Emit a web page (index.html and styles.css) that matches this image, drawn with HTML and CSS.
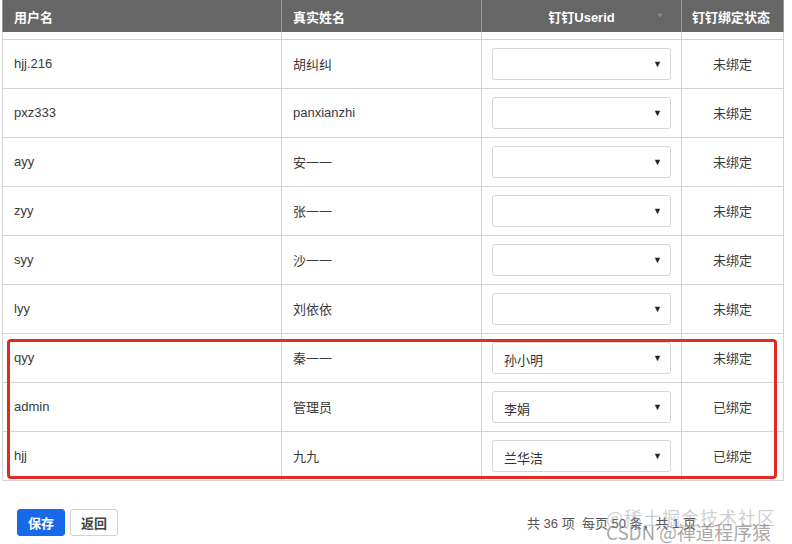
FILE: index.html
```html
<!DOCTYPE html>
<html lang="zh-CN">
<head>
    <meta charset="UTF-8">
    <title>钉钉绑定</title>
    <link rel="stylesheet" href="styles.css">
</head>
<body>

<div class="table-wrap">
    <table class="bind-table">
        <thead>
            <tr>
                <th class="col-user">用户名</th>
                <th class="col-name">真实姓名</th>
                <th class="col-ding sortable">钉钉Userid<span class="sort-icon">&#9660;</span></th>
                <th class="col-state">钉钉绑定状态</th>
            </tr>
        </thead>
        <tbody>
            <tr class="spacer"><td></td><td></td><td></td><td></td></tr>
            <tr><td>hjj.216</td><td>胡纠纠</td><td><div class="select"><span></span><i>&#9660;</i></div></td><td class="state">未绑定</td></tr>
            <tr><td>pxz333</td><td>panxianzhi</td><td><div class="select"><span></span><i>&#9660;</i></div></td><td class="state">未绑定</td></tr>
            <tr><td>ayy</td><td>安一一</td><td><div class="select"><span></span><i>&#9660;</i></div></td><td class="state">未绑定</td></tr>
            <tr><td>zyy</td><td>张一一</td><td><div class="select"><span></span><i>&#9660;</i></div></td><td class="state">未绑定</td></tr>
            <tr><td>syy</td><td>沙一一</td><td><div class="select"><span></span><i>&#9660;</i></div></td><td class="state">未绑定</td></tr>
            <tr><td>lyy</td><td>刘依依</td><td><div class="select"><span></span><i>&#9660;</i></div></td><td class="state">未绑定</td></tr>
            <tr><td>qyy</td><td>秦一一</td><td><div class="select"><span>孙小明</span><i>&#9660;</i></div></td><td class="state">未绑定</td></tr>
            <tr><td>admin</td><td>管理员</td><td><div class="select"><span>李娟</span><i>&#9660;</i></div></td><td class="state">已绑定</td></tr>
            <tr><td>hjj</td><td>九九</td><td><div class="select"><span>兰华洁</span><i>&#9660;</i></div></td><td class="state">已绑定</td></tr>
        </tbody>
    </table>
    <div class="highlight"></div>
</div>

<div class="footer">
    <div class="actions">
        <button type="button" class="btn btn-primary">保存</button>
        <button type="button" class="btn">返回</button>
    </div>
    <div class="pager">共 36 项 &nbsp;每页 50 条，共 1 页</div>
    <div class="watermark">
        <div class="wm-top">@稀土掘金技术社区</div>
        <div class="wm-bottom">CSDN @禅道程序猿</div>
    </div>
</div>

</body>
</html>
```

FILE: styles.css
```css
body {
    margin: 0;
    width: 792px;
    height: 544px;
    overflow: hidden;
    background: #fff;
    font-family: "Liberation Sans", Arial, "Noto Sans CJK SC", sans-serif;
    font-size: 13px;
    color: #333;
    position: relative;
}

.table-wrap {
    position: relative;
    margin-left: 2px;
    width: 781px;
}

.bind-table {
    width: 781px;
    border-collapse: collapse;
    table-layout: fixed;
}

.bind-table th {
    height: 32px;
    padding: 0 0 0 11px;
    background: #666;
    color: #fff;
    font-weight: bold;
    text-align: left;
    border-left: 1px solid #999;
    border-right: 1px solid #999;
    box-sizing: border-box;
}

.col-user { width: 279px; }
.col-name { width: 200px; }
.col-ding { width: 200px; }
.col-state { width: 102px; }

.bind-table th.sortable {
    text-align: center;
    position: relative;
    padding-left: 0;
}

.sort-icon {
    position: absolute;
    right: 17px;
    top: 11px;
    font-size: 8px;
    color: #888;
    font-weight: normal;
}

.bind-table th.col-state {
    padding-left: 10px;
}

.bind-table td {
    height: 49px;
    padding: 0 0 0 11px;
    border: 1px solid #d4d4d4;
    box-sizing: border-box;
    vertical-align: middle;
    color: #3a3a3a;
}

.bind-table tr.spacer td {
    height: 7px;
    border-top: none;
}

.bind-table td:nth-child(3) {
    padding-left: 10px;
}

.bind-table td.state {
    text-align: center;
    padding: 0;
}

.select {
    width: 179px;
    height: 32px;
    border: 1px solid #d6d6d6;
    border-radius: 3px;
    box-sizing: border-box;
    display: flex;
    align-items: center;
    justify-content: space-between;
    padding: 3px 8px 0 11px;
    font-size: 13px;
    color: #333;
}

.select i {
    font-style: normal;
    font-size: 9px;
    color: #222;
    margin-top: -3px;
}

.highlight {
    position: absolute;
    left: 5px;
    top: 339px;
    width: 770px;
    height: 140px;
    border: 3px solid #e02a24;
    border-radius: 4px;
    box-sizing: border-box;
}

.footer {
    display: flex;
    justify-content: space-between;
    align-items: center;
    padding: 28px 0 0 17px;
}

.actions {
    display: flex;
    gap: 5px;
}

.btn {
    height: 27px;
    padding: 0 10px;
    border: 1px solid #d0d0d0;
    border-radius: 3px;
    background: #fff;
    color: #444;
    font-family: "Noto Sans CJK SC", sans-serif;
    font-size: 13px;
    font-weight: bold;
    cursor: pointer;
}

.btn-primary {
    background: #1769e8;
    border-color: #1769e8;
    color: #fff;
}

.pager {
    width: 265px;
    color: #555;
    font-size: 13px;
    white-space: nowrap;
    overflow: hidden;
}

.watermark {
    position: absolute;
    left: 606px;
    top: 506px;
    font-family: "Noto Sans CJK SC", sans-serif;
    pointer-events: none;
}

.wm-top {
    font-size: 18px;
    line-height: 22px;
    color: rgba(160, 160, 160, 0.5);
    letter-spacing: 1px;
}

.wm-bottom {
    font-size: 19px;
    line-height: 22px;
    margin-top: -7px;
    color: rgba(110, 110, 110, 0.6);
    letter-spacing: -0.2px;
}
```
